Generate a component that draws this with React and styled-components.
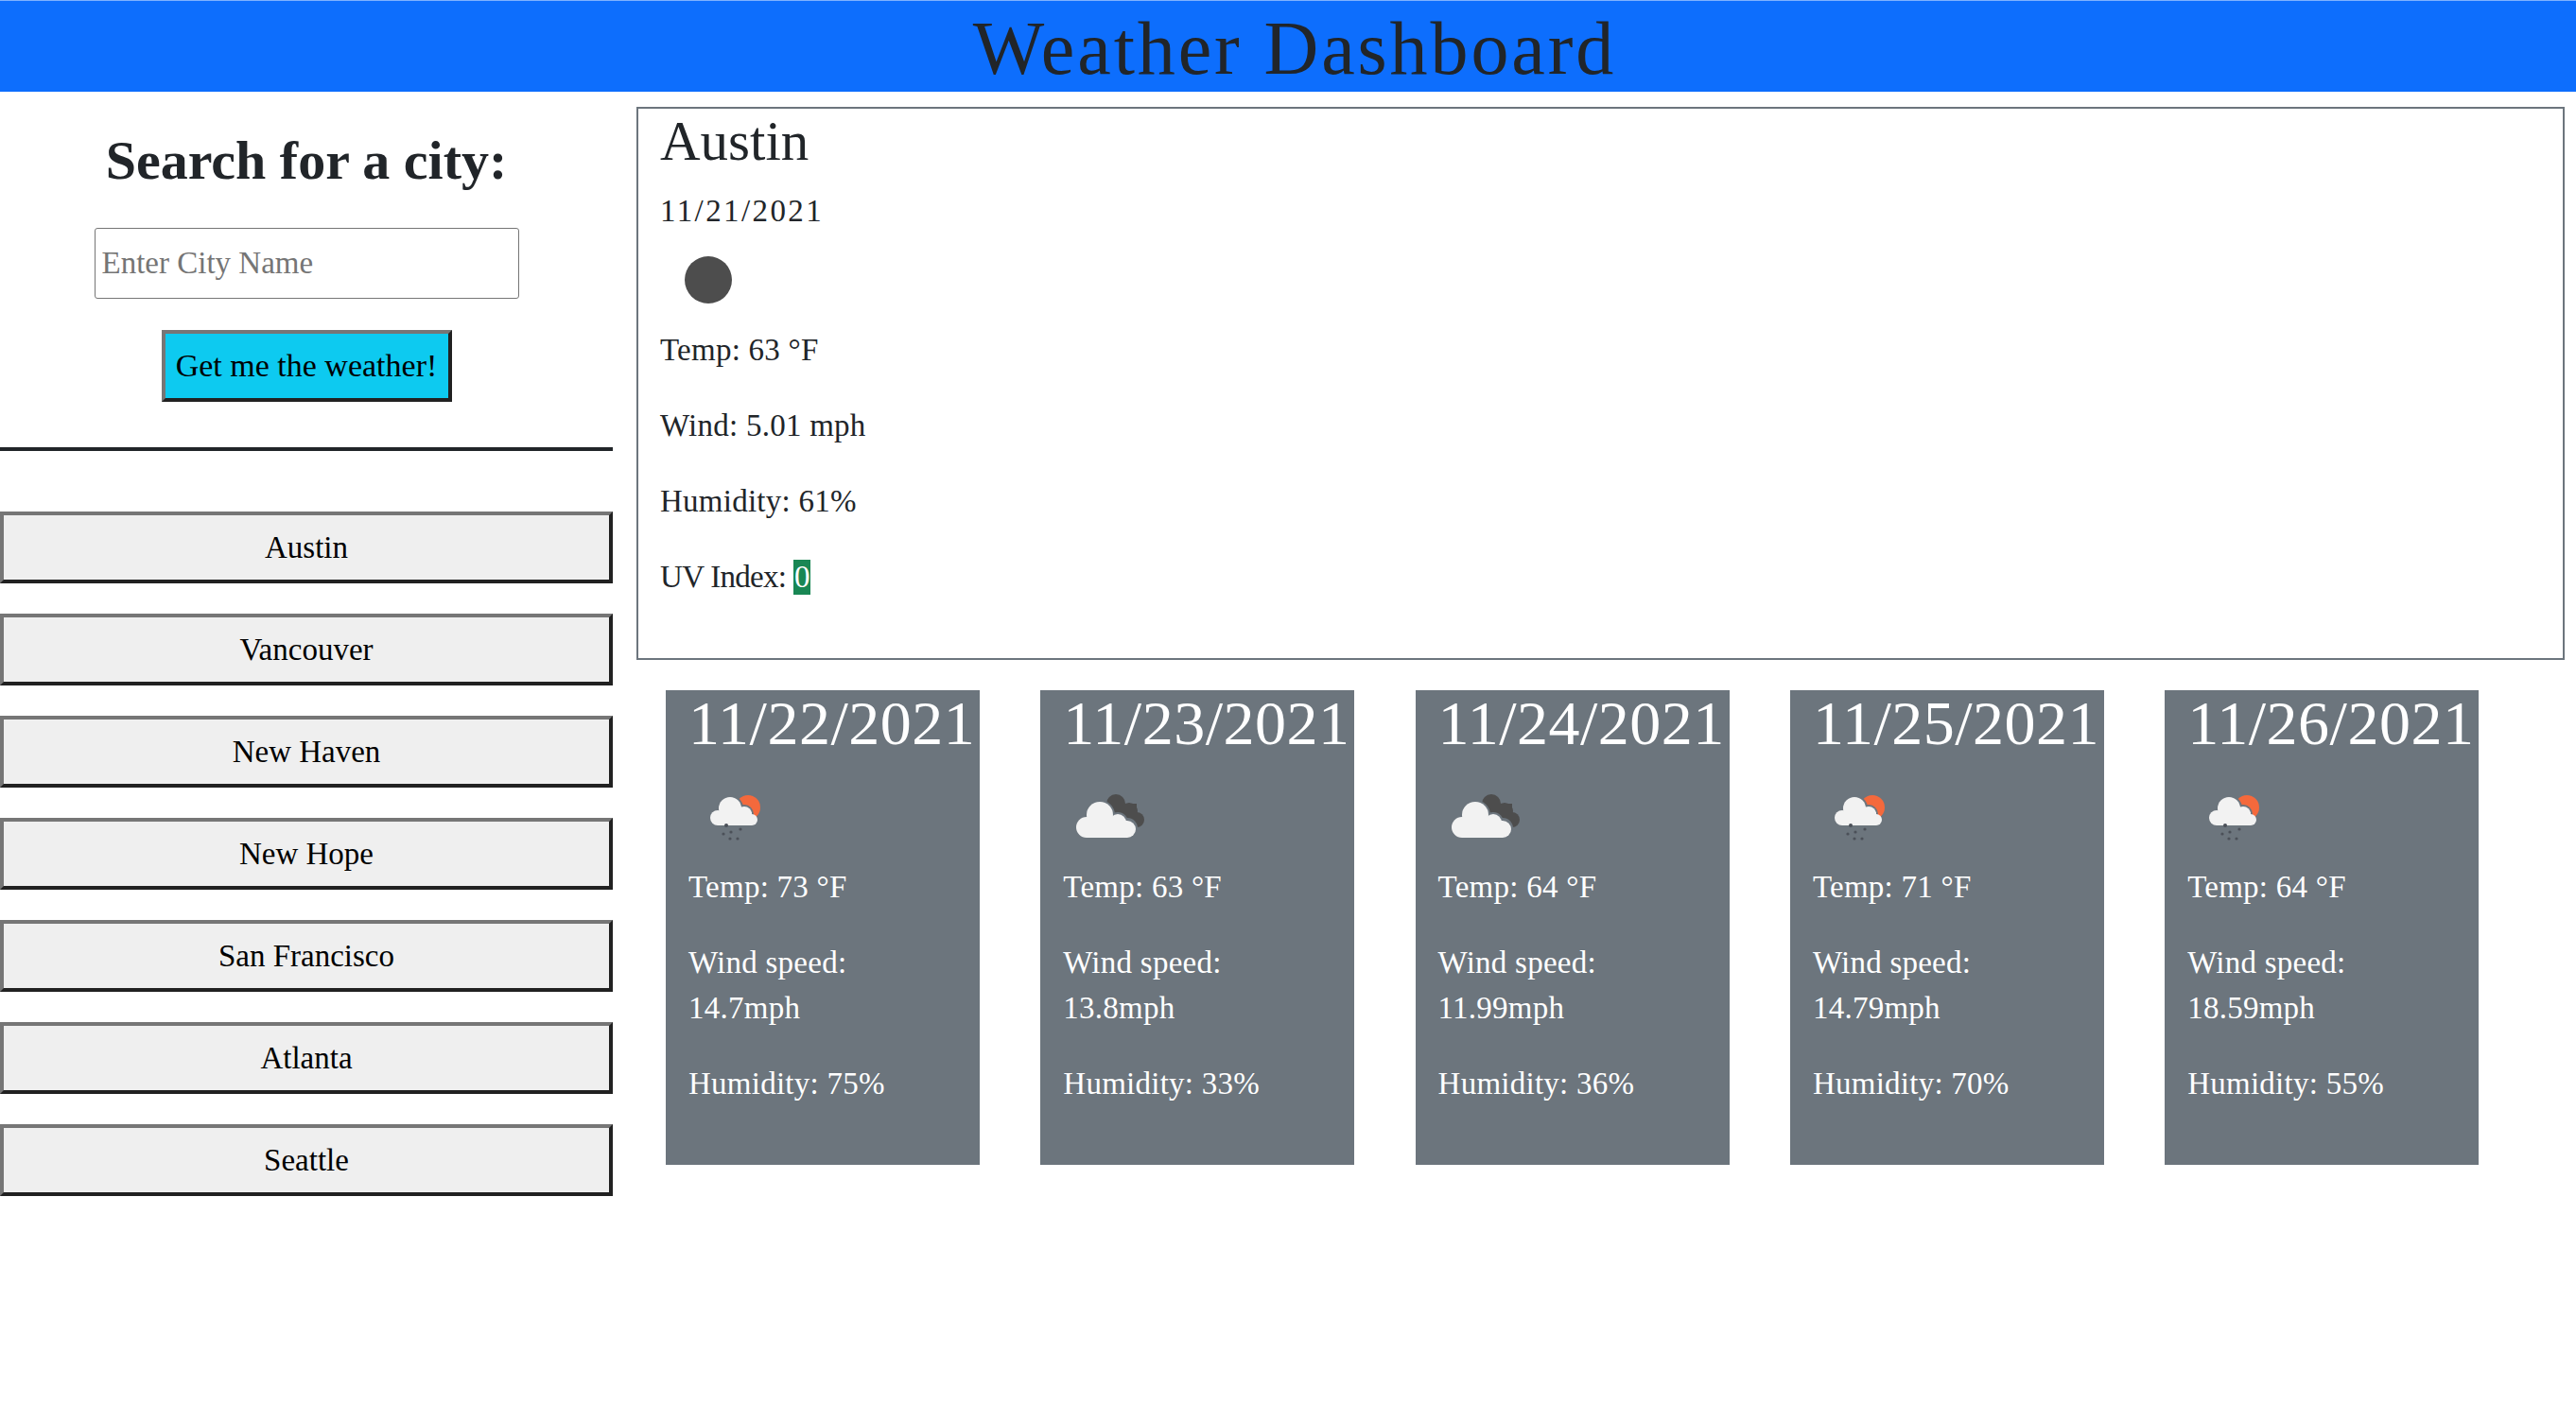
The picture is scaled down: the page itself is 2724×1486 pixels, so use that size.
import React from 'react';
import styled, { createGlobalStyle } from 'styled-components';

const Global = createGlobalStyle`
  html, body { margin: 0; padding: 0; background: #fff; }
  body { font-family: 'Liberation Serif', serif; color: #212529; }
`;

const Header = styled.header`
  height: 96px;
  padding-left: 14px;
  border-top: 1px solid #7fb2ff;
  background: #0d6efd;
  text-align: center;
  font-size: 80px;
  letter-spacing: 2.9px;
  line-height: 100px;
`;

const Page = styled.div`
  display: flex;
  align-items: flex-start;
`;

const Sidebar = styled.aside`
  flex: 0 0 648px;
  margin-right: 25px;
  padding-top: 40px;
  display: flex;
  flex-direction: column;
  align-items: center;
`;

const SearchTitle = styled.h2`
  margin: 0 0 38px;
  font-size: 58px;
  line-height: 66px;
  font-weight: 700;
`;

const CityInput = styled.input`
  box-sizing: border-box;
  width: 449px;
  height: 75px;
  margin-bottom: 33px;
  padding: 0 7px;
  border: 1px solid #767676;
  border-radius: 3px;
  font: 33px 'Liberation Serif', serif;
  &::placeholder { color: #757575; opacity: 1; }
`;

const Btn = styled.button`
  box-sizing: border-box;
  height: 76px;
  padding: 0;
  border-width: 4px;
  border-style: solid;
  border-color: #767676 #212121 #212121 #767676;
  font: 34px 'Liberation Serif', serif;
  color: #000;
`;

const SearchButton = styled(Btn)`
  width: 307px;
  background: #0dcaf0;
`;

const Rule = styled.hr`
  width: 100%;
  height: 4px;
  margin: 48px 0 64px;
  border: 0;
  background: #212529;
`;

const CityList = styled.div`
  width: 100%;
  display: flex;
  flex-direction: column;
  gap: 32px;
`;

const CityButton = styled(Btn)`
  width: 100%;
  font-size: 33px;
  background: #efefef;
`;

const Main = styled.main`
  flex: 1;
  min-width: 0;
  margin: 16px 12px 0 0;
`;

const Current = styled.section`
  box-sizing: border-box;
  height: 585px;
  padding: 1px 23px 0;
  border: 2px solid #6c757d;
`;

const CityName = styled.h2`
  margin: 0 0 16px;
  font-size: 59px;
  line-height: 67px;
  font-weight: 400;
`;

const Line = styled.p`
  margin: 0 0 32px;
  font-size: 33px;
  letter-spacing: 0.25px;
  line-height: 48px;
`;

const DateLine = styled(Line)`
  margin-bottom: -1px;
  letter-spacing: 2.4px;
`;

const UvLine = styled(Line)`
  letter-spacing: -0.7px;
`;

const Badge = styled.span`
  display: inline-block;
  padding: 0 1px;
  background: #198754;
  color: #fff;
  line-height: 37px;
`;

const Icon = styled.svg`
  display: block;
  width: 100px;
  height: 100px;
`;

const Forecast = styled.div`
  display: flex;
  gap: 64.3px;
  margin-top: 32px;
  padding-left: 31px;
`;

const Card = styled.article`
  box-sizing: border-box;
  flex: 0 0 332px;
  height: 502px;
  padding: 1px 0 0 24px;
  background: #6c757d;
  color: #fff;
`;

const CardDate = styled.h2`
  margin: 0 0 16px;
  font-size: 66px;
  letter-spacing: 0.5px;
  line-height: 67px;
  font-weight: 400;
  white-space: nowrap;
`;

const MoonIcon = () => (
  <Icon viewBox="0 0 100 100">
    <circle cx="51" cy="50" r="25" fill="#4d4d4d" />
  </Icon>
);

const RainIcon = () => (
  <Icon viewBox="0 0 100 100">
    <circle cx="63" cy="40" r="13" fill="#f4693c" />
    <g fill="#6c757d">
      <circle cx="44" cy="41" r="14" />
      <circle cx="59" cy="47" r="10" />
    </g>
    <g fill="#f2f2f2">
      <circle cx="44" cy="41" r="12" />
      <circle cx="31" cy="51" r="8" />
      <circle cx="59" cy="47" r="8" />
      <circle cx="67" cy="53" r="6" />
      <rect x="31" y="45" width="36" height="14" />
    </g>
    <g fill="#4b5058">
      <circle cx="40" cy="59" r="2" />
      <circle cx="37" cy="68" r="1.6" />
      <circle cx="45" cy="66" r="1.6" />
      <circle cx="55" cy="63" r="1.6" />
      <circle cx="44" cy="73" r="1.6" />
      <circle cx="52" cy="73" r="1.6" />
    </g>
  </Icon>
);

const CloudIcon = () => (
  <Icon viewBox="0 0 100 100">
    <g fill="#4d4d4d">
      <circle cx="56" cy="36" r="10" />
      <circle cx="70" cy="44" r="9" />
      <circle cx="78" cy="53" r="8" />
      <rect x="56" y="36" width="22" height="22" />
    </g>
    <g fill="#6c757d">
      <circle cx="39" cy="48" r="16" />
      <circle cx="58" cy="56" r="11" />
      <circle cx="68" cy="62" r="11" />
    </g>
    <g fill="#f2f2f2">
      <circle cx="39" cy="48" r="14" />
      <circle cx="25" cy="61" r="11" />
      <circle cx="58" cy="56" r="9" />
      <circle cx="68" cy="63" r="9" />
      <rect x="25" y="54" width="43" height="18" />
    </g>
  </Icon>
);

const cities = ['Austin', 'Vancouver', 'New Haven', 'New Hope', 'San Francisco', 'Atlanta', 'Seattle'];

const days = [
  { date: '11/22/2021', temp: 73, wind: '14.7mph', hum: 75, Art: RainIcon },
  { date: '11/23/2021', temp: 63, wind: '13.8mph', hum: 33, Art: CloudIcon },
  { date: '11/24/2021', temp: 64, wind: '11.99mph', hum: 36, Art: CloudIcon },
  { date: '11/25/2021', temp: 71, wind: '14.79mph', hum: 70, Art: RainIcon },
  { date: '11/26/2021', temp: 64, wind: '18.59mph', hum: 55, Art: RainIcon },
];

const App = () => (
  <>
    <Global />
    <Header>Weather Dashboard</Header>
    <Page>
      <Sidebar>
        <SearchTitle>Search for a city:</SearchTitle>
        <CityInput placeholder="Enter City Name" />
        <SearchButton>Get me the weather!</SearchButton>
        <Rule />
        <CityList>
          {cities.map(c => <CityButton key={c}>{c}</CityButton>)}
        </CityList>
      </Sidebar>
      <Main>
        <Current>
          <CityName>Austin</CityName>
          <DateLine>11/21/2021</DateLine>
          <MoonIcon />
          <Line>Temp: 63 °F</Line>
          <Line>Wind: 5.01 mph</Line>
          <Line>Humidity: 61%</Line>
          <UvLine>UV Index: <Badge>0</Badge></UvLine>
        </Current>
        <Forecast>
          {days.map(({ date, temp, wind, hum, Art }) => (
            <Card key={date}>
              <CardDate>{date}</CardDate>
              <Art />
              <Line>Temp: {temp} °F</Line>
              <Line>Wind speed:<br />{wind}</Line>
              <Line>Humidity: {hum}%</Line>
            </Card>
          ))}
        </Forecast>
      </Main>
    </Page>
  </>
);

export default App;
